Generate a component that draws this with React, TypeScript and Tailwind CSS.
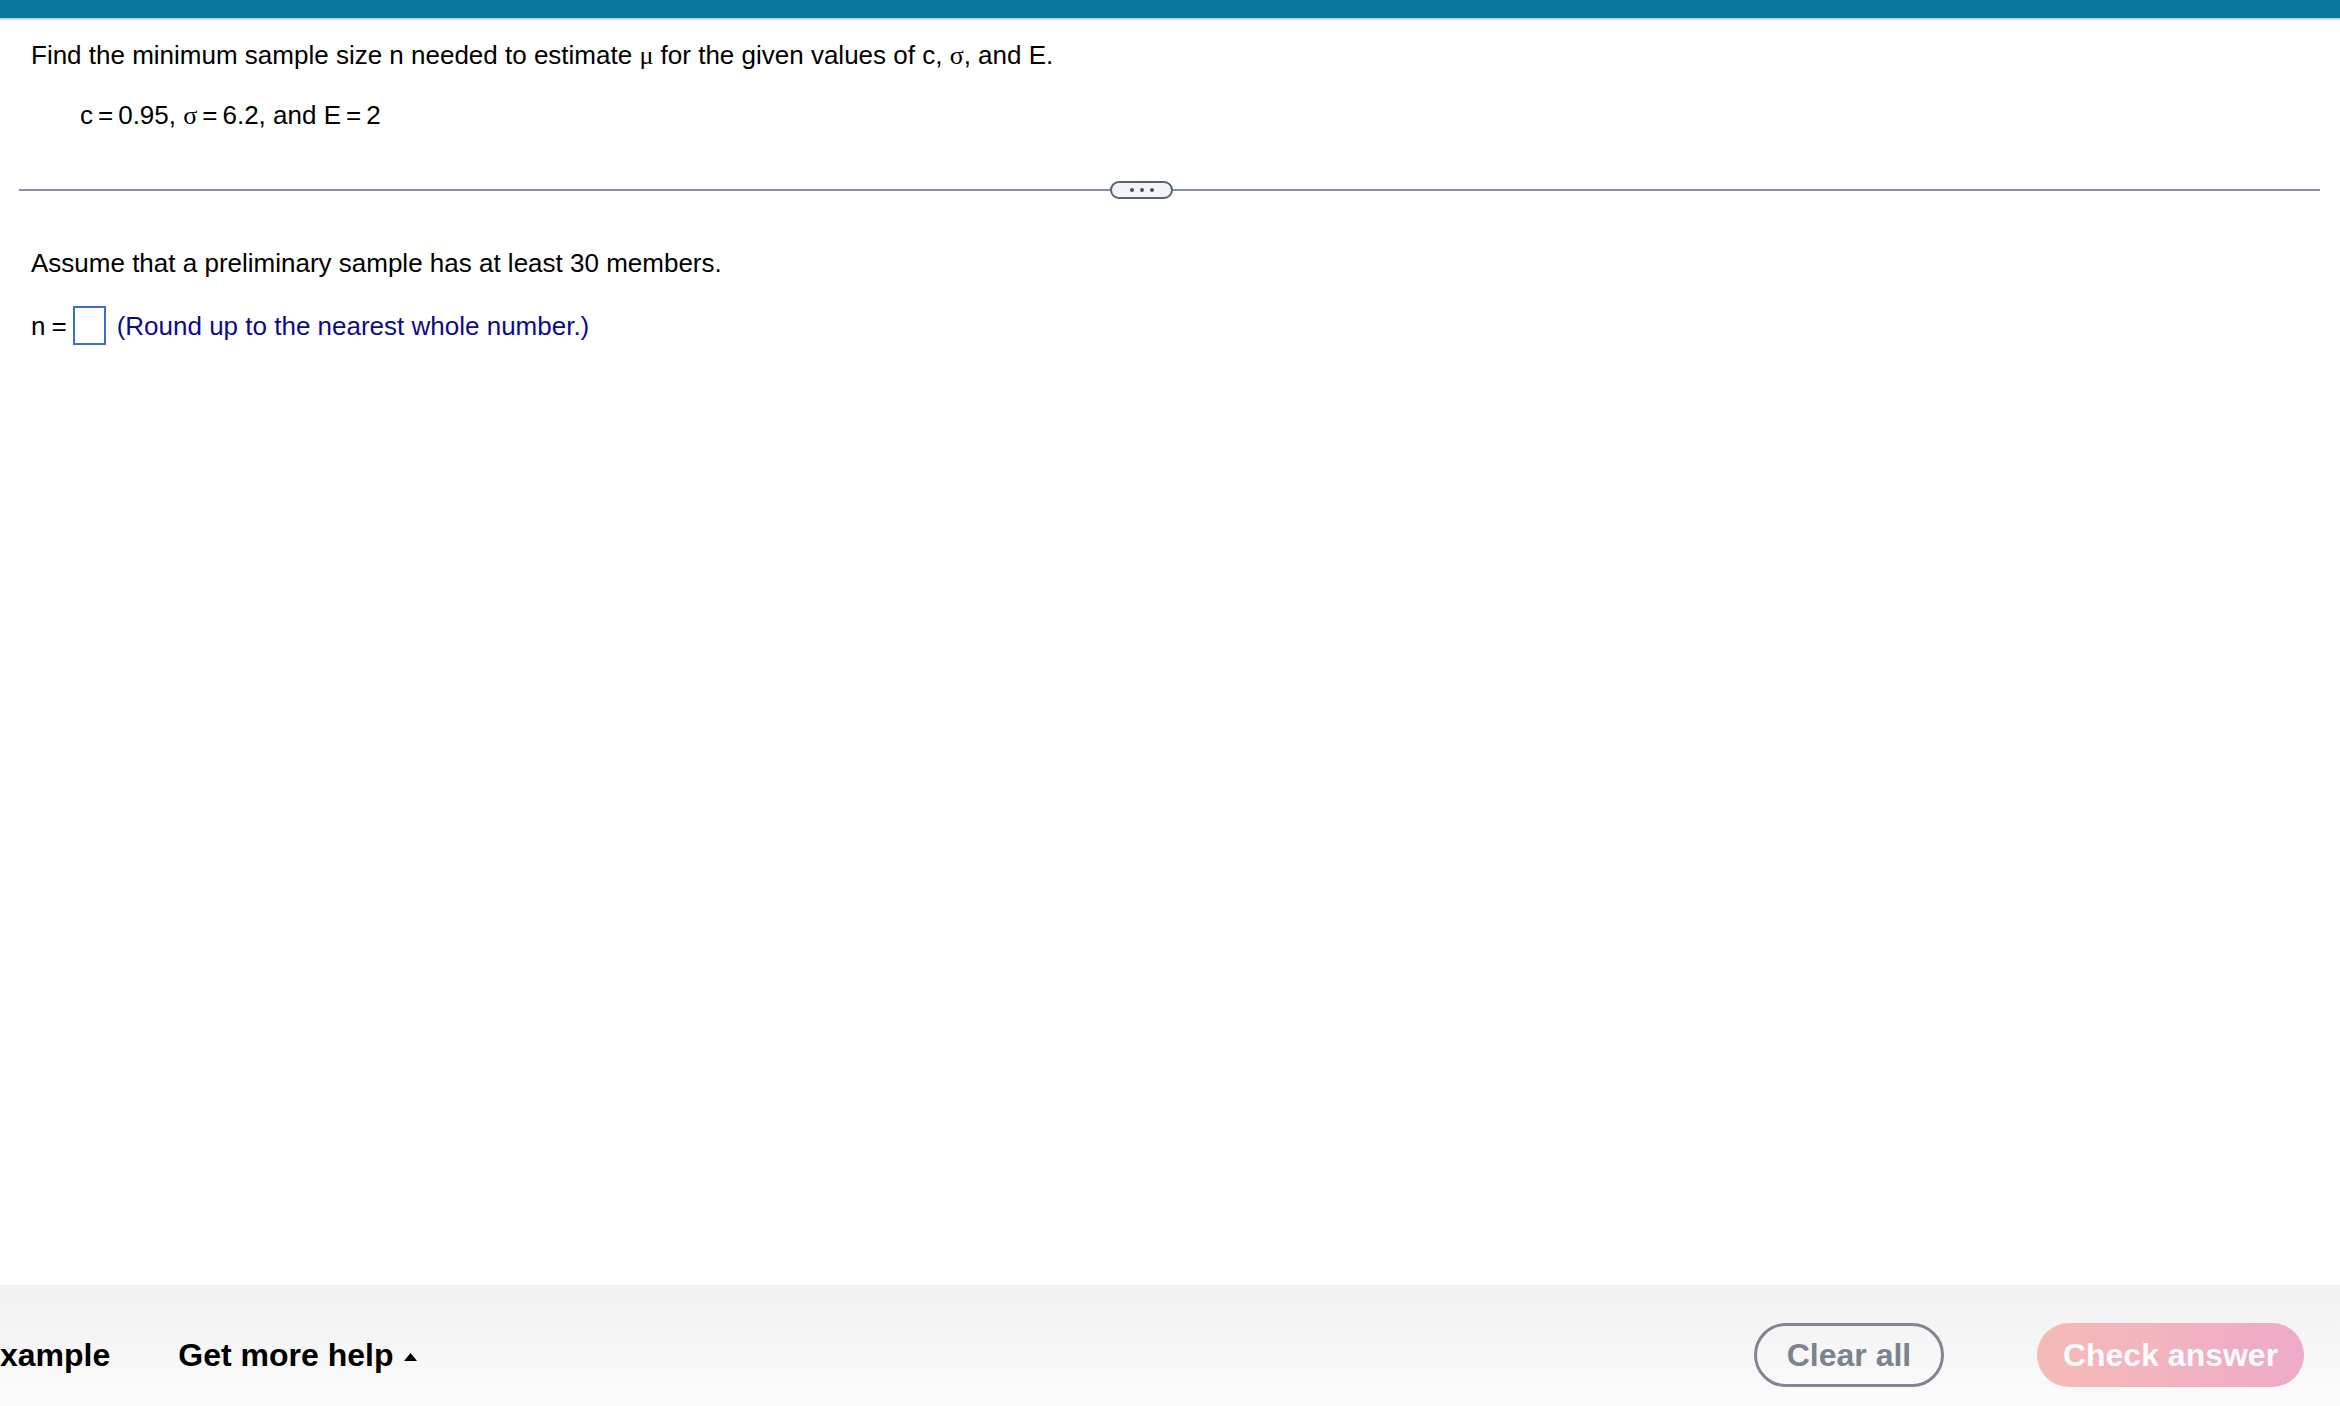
import React from 'react';

export default function App() {
  return (
    <div className="relative flex h-[1406px] w-full flex-col overflow-hidden bg-white font-['Liberation_Sans',Arial,sans-serif] text-black">
      {/* Top bar */}
      <div className="h-[18px] w-full bg-[#07779b]" />
      <div className="h-[2px] w-full bg-[#cdd3da]" />

      <div className="flex flex-1 flex-col">
        <div className="px-[31px] pt-[20px] text-[26px] leading-[30px]">
          <p>
            Find the minimum sample size n needed to estimate{' '}
            <span className="font-['Liberation_Serif',serif]">μ</span> for the given values of c,{' '}
            <span className="font-['Liberation_Serif',serif]">σ</span>, and E.
          </p>
          <p className="mt-[29px] pl-[49px]">
            c<span className="mx-[5px]">=</span>0.95,{' '}
            <span className="font-['Liberation_Serif',serif]">σ</span>
            <span className="mx-[5px]">=</span>6.2, and E<span className="mx-[5px]">=</span>2
          </p>
        </div>

        {/* Divider with expand pill */}
        <div className="mt-[50px] flex items-center pl-[19px] pr-[20px]">
          <div className="h-[2px] w-[1091px] bg-[#87919d]" />
          <button className="flex h-[18px] w-[63px] items-center justify-center gap-[6px] rounded-full border-2 border-[#566373] bg-[#f3f4f6]">
            <span className="h-[4px] w-[4px] rounded-full bg-[#4a4f57]" />
            <span className="h-[4px] w-[4px] rounded-full bg-[#4a4f57]" />
            <span className="h-[4px] w-[4px] rounded-full bg-[#4a4f57]" />
          </button>
          <div className="h-[2px] flex-1 bg-[#87919d]" />
        </div>

        <div className="px-[31px] pt-[49px] text-[26px] leading-[30px]">
          <p>Assume that a preliminary sample has at least 30 members.</p>
          <div className="mt-[28px] flex items-center">
            <span>n</span>
            <span className="ml-[6px]">=</span>
            <span className="ml-[6px] h-[39px] w-[33px] border-2 border-[#3a6fd0] bg-white" />
            <span className="ml-[11px] text-[#0b0b8a]">(Round up to the nearest whole number.)</span>
          </div>
        </div>
      </div>

      {/* Footer */}
      <div className="flex h-[121px] items-center bg-gradient-to-b from-[#f1f1f1] to-[#fbfbfb] pt-[18px] text-[32px] font-bold leading-[40px]">
        <span className="pl-0">xample</span>
        <span className="ml-[68px] flex items-center">
          Get more help
          <svg className="ml-[11px] mt-[4px]" width="13" height="8" viewBox="0 0 13 8">
            <polygon points="6.5,0 13,8 0,8" fill="#000" />
          </svg>
        </span>
        <div className="ml-auto flex items-center pr-[36px]">
          <button className="flex h-[64px] w-[190px] items-center justify-center rounded-full border-[3px] border-[#7f8591] text-[#7b8290]">
            Clear all
          </button>
          <button className="ml-[93px] flex h-[64px] w-[267px] items-center justify-center rounded-full bg-gradient-to-r from-[#f5bbb6] to-[#eeaac8] text-[#fbfbfd]">
            Check answer
          </button>
        </div>
      </div>
    </div>
  );
}
